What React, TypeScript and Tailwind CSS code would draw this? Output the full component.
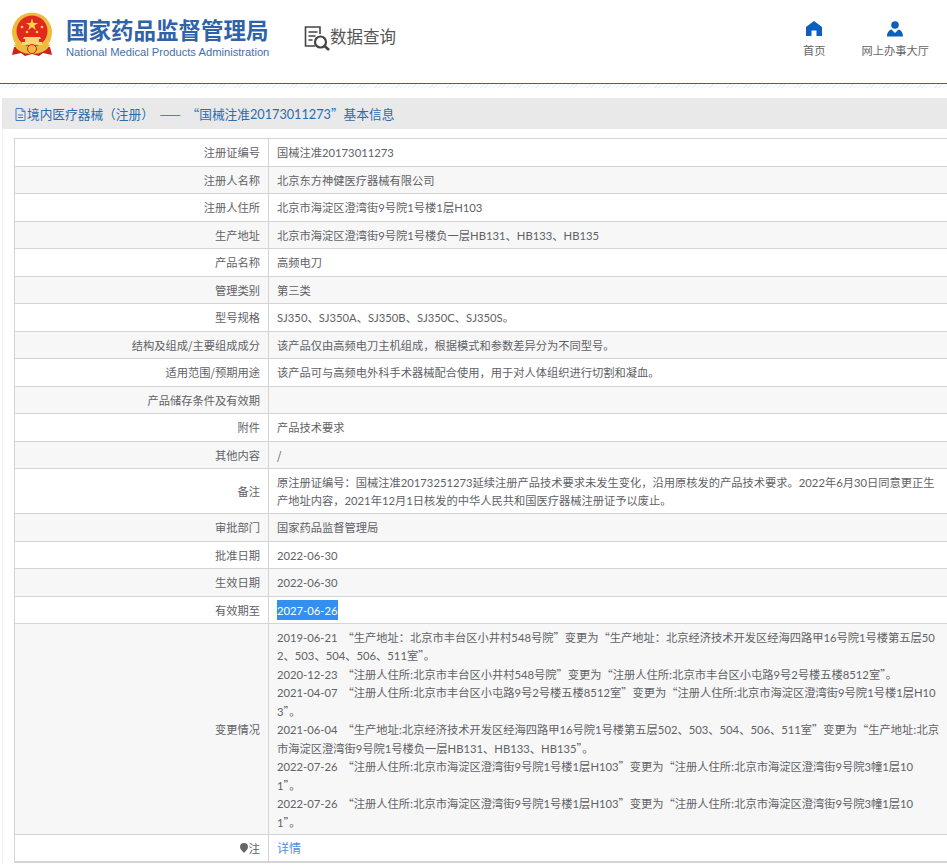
import type { ReactNode } from "react";

const font = "[font-family:'Noto_Sans_CJK_SC','Noto_Sans',sans-serif]";

interface Row {
  label: string;
  value: ReactNode;
  height?: string;
}

// digits and latin are wider in the picture than in the CJK face
function mix(text: string) {
  return text.split(/([0-9A-Za-z\-./]+)/).map((part, i) =>
    i % 2 === 1 ? (
      <span key={i} className="leading-none [font-family:'Lato',sans-serif]">
        {part}
      </span>
    ) : (
      part
    ),
  );
}

const changes = [
  ["2019-06-21", "“生产地址：北京市丰台区小井村548号院”变更为“生产地址：北京经济技术开发区经海四路甲16号院1号楼第五层50\n2、503、504、506、511室”。"],
  ["2020-12-23", "“注册人住所:北京市丰台区小井村548号院”变更为“注册人住所:北京市丰台区小屯路9号2号楼五楼8512室”。"],
  ["2021-04-07", "“注册人住所:北京市丰台区小屯路9号2号楼五楼8512室”变更为“注册人住所:北京市海淀区澄湾街9号院1号楼1层H10\n3”。"],
  ["2021-06-04", "“生产地址:北京经济技术开发区经海四路甲16号院1号楼第五层502、503、504、506、511室”变更为“生产地址:北京\n市海淀区澄湾街9号院1号楼负一层HB131、HB133、HB135”。"],
  ["2022-07-26", "“注册人住所:北京市海淀区澄湾街9号院1号楼1层H103”变更为“注册人住所:北京市海淀区澄湾街9号院3幢1层10\n1”。"],
  ["2022-07-26", "“注册人住所:北京市海淀区澄湾街9号院1号楼1层H103”变更为“注册人住所:北京市海淀区澄湾街9号院3幢1层10\n1”。"],
];

const rows: Row[] = [
  { label: "注册证编号", value: mix("国械注准20173011273") },
  { label: "注册人名称", value: "北京东方神健医疗器械有限公司" },
  { label: "注册人住所", value: mix("北京市海淀区澄湾街9号院1号楼1层H103") },
  { label: "生产地址", value: mix("北京市海淀区澄湾街9号院1号楼负一层HB131、HB133、HB135") },
  { label: "产品名称", value: "高频电刀" },
  { label: "管理类别", value: "第三类" },
  { label: "型号规格", value: mix("SJ350、SJ350A、SJ350B、SJ350C、SJ350S。") },
  { label: "结构及组成/主要组成成分", value: "该产品仅由高频电刀主机组成，根据模式和参数差异分为不同型号。" },
  { label: "适用范围/预期用途", value: "该产品可与高频电外科手术器械配合使用，用于对人体组织进行切割和凝血。" },
  { label: "产品储存条件及有效期", value: "" },
  { label: "附件", value: "产品技术要求" },
  { label: "其他内容", value: "/" },
  {
    label: "备注",
    value: mix(
      "原注册证编号：国械注准20173251273延续注册产品技术要求未发生变化，沿用原核发的产品技术要求。2022年6月30日同意更正生产地址内容，2021年12月1日核发的中华人民共和国医疗器械注册证予以废止。",
    ),
    height: "h-[45px]",
  },
  { label: "审批部门", value: "国家药品监督管理局" },
  { label: "批准日期", value: mix("2022-06-30") },
  { label: "生效日期", value: mix("2022-06-30") },
  {
    label: "有效期至",
    value: <span className="bg-[#3390f0] py-[2px] text-white">{mix("2027-06-26")}</span>,
  },
  {
    label: "变更情况",
    value: changes.map(([date, text], i) => (
      <div key={i} className="whitespace-pre-line">
        {mix(`${date}\u00a0\u00a0${text}`)}
      </div>
    )),
    height: "h-[211px]",
  },
];

function Emblem() {
  return (
    <svg viewBox="0 0 42 46" className="h-[46px] w-[42px]">
      <path d="M3 35 L1 43 L10 41 L14 44 L21 42 L28 44 L32 41 L41 43 L39 35 Z" fill="#c8231c" />
      <circle cx="21" cy="20.500" r="20" fill="#eebb3e" />
      <circle cx="21" cy="19" r="15.500" fill="#e3291d" />
      <path d="M21 6.500l1.500 4.400h4.600l-3.700 2.700 1.400 4.400-3.800-2.700-3.800 2.700 1.400-4.400-3.700-2.700h4.600z" fill="#f9d648" />
      <circle cx="11" cy="15" r="1.300" fill="#f9d648" />
      <circle cx="31" cy="15" r="1.300" fill="#f9d648" />
      <circle cx="16" cy="20" r="1.300" fill="#f9d648" />
      <circle cx="26" cy="20" r="1.300" fill="#f9d648" />
      <path d="M13 25h16l1 2h-2v3h3v3H11v-3h3v-3h-2z" fill="#f6d776" />
      <path d="M8 31c3 5 8 7 13 7s10-2 13-7l5 2c-3 6-10 9-18 9s-15-3-18-9z" fill="#eebb3e" />
      <circle cx="21" cy="37" r="4.500" fill="#eebb3e" stroke="#c8231c" strokeWidth="1" />
    </svg>
  );
}

function DataIcon() {
  return (
    <svg viewBox="0 0 26 26" className="h-[26px] w-[26px]" fill="none" stroke="#444" strokeWidth="1.600">
      <path d="M11 20H1.500V1h14.500v7" />
      <path d="M4.500 6h9M4.500 10h7M4.500 14h4" />
      <circle cx="16.500" cy="16" r="5.500" strokeWidth="2.200" />
      <path d="M20.500 20l4.500 4" strokeWidth="2.600" />
    </svg>
  );
}

function HomeIcon() {
  return (
    <svg viewBox="0 0 16 15" className="h-[15px] w-[16px]" fill="#0b5fbf">
      <path d="M8 0L0 6v9h5.500V9.500h5V15H16V6z" />
    </svg>
  );
}

function PersonIcon() {
  return (
    <svg viewBox="0 0 16 16" className="h-[16px] w-[16px]" fill="#0b5fbf">
      <circle cx="8" cy="4" r="3.800" />
      <path d="M4.500 8.500L8 12l3.500-3.500C14 9 16 11.500 16 15.500H0C0 11.500 2 9 4.500 8.500z" />
    </svg>
  );
}

function PageIcon() {
  return (
    <svg viewBox="0 0 11 13" className="h-[13px] w-[11px]" fill="none" stroke="#3f7fc4" strokeWidth="1">
      <path d="M1 .5h6l3 3v9H1z" />
      <path d="M7 .5v3h3M3 7h5M3 9.500h5" />
    </svg>
  );
}

function PinIcon() {
  return (
    <svg viewBox="0 0 8 10" className="h-[10px] w-[8px]" fill="#666">
      <path d="M4 0a4 4 0 014 4c0 2.500-2.500 4-4 6C2.500 8 0 6.500 0 4a4 4 0 014-4z" />
    </svg>
  );
}

const tdBase = "border border-[#d4d4d4] align-middle";

export default function App() {
  return (
    <div className={`${font} h-[867px] w-[947px] overflow-hidden bg-white text-[11.25px] text-[#606266]`}>
      {/* header */}
      <div className="flex h-[83px] items-start">
        <div className="ml-[11px] mt-[12px]">
          <Emblem />
        </div>
        <div className="ml-[13px] mt-[13px] w-[210px]">
          <div className="whitespace-nowrap text-[22.5px] font-bold leading-[32px] text-[#2f62a8]">国家药品监督管理局</div>
          <div className="whitespace-nowrap font-['Liberation_Sans',sans-serif] text-[11.2px] leading-[14px] text-[#3f6fae]">
            National Medical Products Administration
          </div>
        </div>
        <div className="ml-[28px] mt-[26px]">
          <DataIcon />
        </div>
        <div className="mt-[23px] whitespace-nowrap text-[16.5px] leading-[26px] text-[#555]">数据查询</div>
        <div className="ml-auto mr-[18px] mt-[21px] flex gap-[36px] text-[#666]">
          <div className="flex flex-col items-center gap-[4px]">
            <HomeIcon />
            <span className="leading-[20px]">首页</span>
          </div>
          <div className="flex flex-col items-center gap-[3px]">
            <PersonIcon />
            <span className="leading-[20px]">网上办事大厅</span>
          </div>
        </div>
      </div>
      <div className="h-px bg-[#1c6ea4]" />
      <div className="h-[4px] bg-[repeating-linear-gradient(135deg,#eeeeee_0,#eeeeee_1px,#ffffff_1px,#ffffff_3px)]" />

      {/* title */}
      <div className="ml-[2px] mt-[10px] flex h-[31px] items-center gap-[1px] bg-[#e9e9e9] pl-[13px] pt-[1px] text-[12.7px] text-[#2a6cb0]">
        <PageIcon />
        <span className="whitespace-pre">{mix("境内医疗器械（注册）  ——  “国械注准20173011273”基本信息")}</span>
      </div>

      {/* detail table */}
      <div className="ml-[2px] border-l border-[#f0f0f0] pl-[11px] pt-[9.3px]">
        <table className="w-[934px] table-fixed border-collapse border-b-2 border-b-[#d4d4d4] leading-[18.5px]">
          <colgroup>
            <col className="w-[254px]" />
            <col />
          </colgroup>
          <tbody>
            {rows.map((r, i) => (
              <tr key={r.label} className={`${r.height ?? "h-[27.5px]"} ${i % 2 === 1 ? "bg-[#f7f7f7]" : "bg-white"}`}>
                <td className={`${tdBase} pr-[8px] text-right`}>{r.label}</td>
                <td className={`${tdBase} break-all pl-[8px] pr-[4px]`}>{r.value}</td>
              </tr>
            ))}
            <tr className="h-[27.5px] bg-white">
              <td className={`${tdBase} pr-[8px] text-right`}>
                <span className="inline-flex items-center gap-[1px]">
                  <PinIcon />注
                </span>
              </td>
              <td className={`${tdBase} pl-[8px] text-[12px] text-[#4a90e2]`}>详情</td>
            </tr>
          </tbody>
        </table>
      </div>
    </div>
  );
}
